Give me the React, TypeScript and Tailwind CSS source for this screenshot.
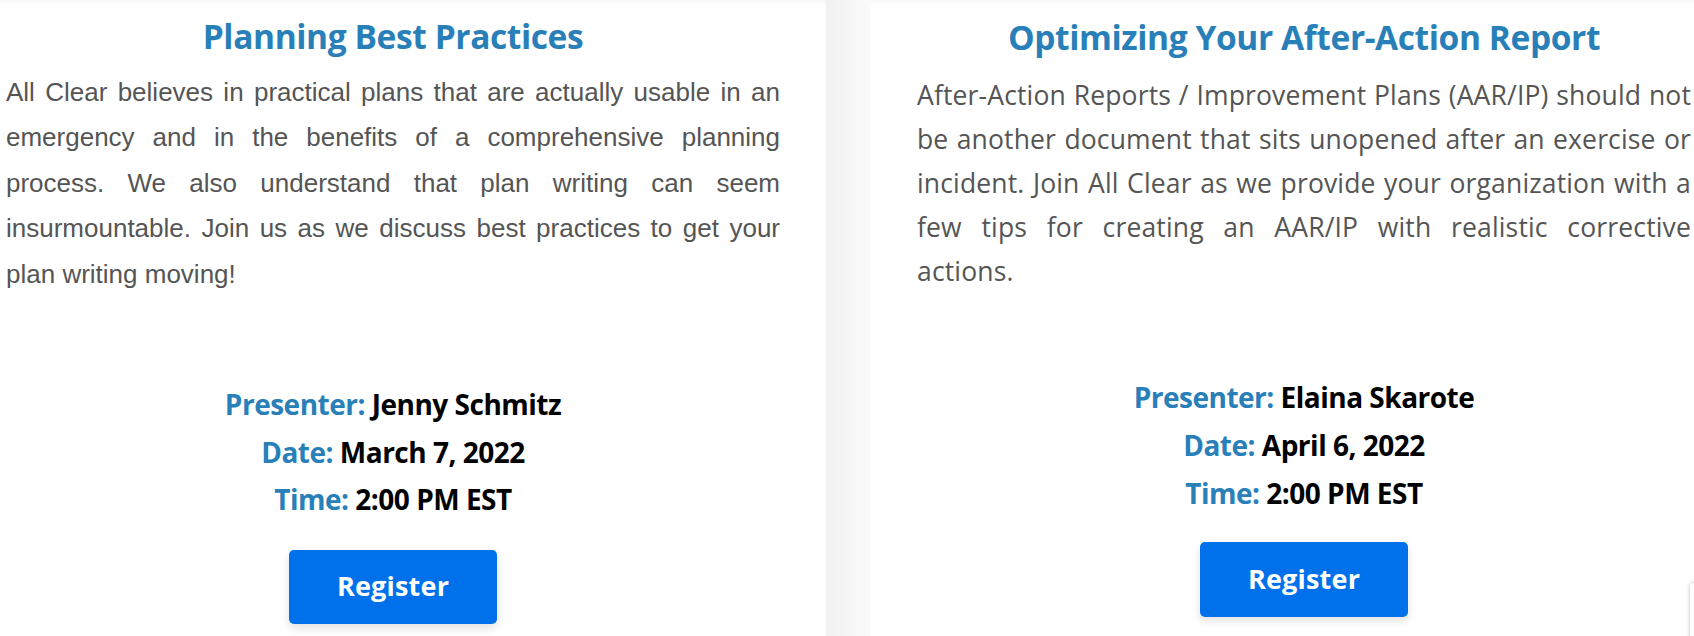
import React from 'react';

type Session = {
  title: string;
  body: string;
  presenter: string;
  date: string;
  time: string;
};

const sessions: Session[] = [
  {
    title: 'Planning Best Practices',
    body: 'All Clear believes in practical plans that are actually usable in an emergency and in the benefits of a comprehensive planning process. We also understand that plan writing can seem insurmountable. Join us as we discuss best practices to get your plan writing moving!',
    presenter: 'Jenny Schmitz',
    date: 'March 7, 2022',
    time: '2:00 PM EST',
  },
  {
    title: 'Optimizing Your After-Action Report',
    body: 'After-Action Reports / Improvement Plans (AAR/IP) should not be another document that sits unopened after an exercise or incident. Join All Clear as we provide your organization with a few tips for creating an AAR/IP with realistic corrective actions.',
    presenter: 'Elaina Skarote',
    date: 'April 6, 2022',
    time: '2:00 PM EST',
  },
];

function InfoLine({ label, value }: { label: string; value: string }) {
  return (
    <div>
      <span className="text-[#2980b9]">{label}</span> <span className="text-black">{value}</span>
    </div>
  );
}

function RegisterButton({ className }: { className: string }) {
  return (
    <button
      className={
        'w-[208px] h-[74px] rounded-[5px] bg-[#0071eb] text-white text-[27px] font-bold font-["Open_Sans",sans-serif] tracking-[0.2px] shadow-[0_4px_10px_rgba(0,0,0,0.12)] ' +
        className
      }
    >
      Register
    </button>
  );
}

export default function App() {
  const [left, right] = sessions;

  return (
    <div className="relative w-[1694px] h-[636px] overflow-hidden bg-white flex shadow-[inset_0_8px_8px_-8px_rgba(0,0,0,0.07)]">
      {/* left card */}
      <div className="w-[826px] shrink-0 pl-[6px] pr-[46px] pt-[14px] flex flex-col items-center">
        <h2 className="text-[33.5px] leading-[44px] font-bold text-[#2980b9] font-['Open_Sans',sans-serif] tracking-[-0.4px]">
          {left.title}
        </h2>
        <p className="mt-[12px] w-full text-[26px] leading-[45.4px] text-[#555555] text-justify font-['Liberation_Sans',Arial,sans-serif]">
          {left.body}
        </p>
        <div className="mt-[84px] text-center text-[28px] leading-[47.5px] font-bold font-['Open_Sans',sans-serif] tracking-[-0.5px]">
          <InfoLine label="Presenter:" value={left.presenter} />
          <InfoLine label="Date:" value={left.date} />
          <InfoLine label="Time:" value={left.time} />
        </div>
        <RegisterButton className="mt-[26px]" />
      </div>

      {/* gutter between cards */}
      <div className="w-[45px] shrink-0 bg-[linear-gradient(to_right,#f1f1f1,#f4f4f4_40%,#f8f8f8_60%,#fafafa)]" />

      {/* right card */}
      <div className="flex-1 pl-[46px] pr-[3px] pt-[15px] flex flex-col items-center">
        <h2 className="text-[33.5px] leading-[44px] font-bold text-[#2980b9] font-['Open_Sans',sans-serif] tracking-[-0.4px]">
          {right.title}
        </h2>
        <p className="mt-[14px] w-full text-[26.5px] leading-[44px] tracking-[0.15px] text-[#555555] text-justify font-['Open_Sans',sans-serif]">
          {right.body}
        </p>
        <div className="mt-[80px] text-center text-[28px] leading-[48px] font-bold font-['Open_Sans',sans-serif] tracking-[-0.5px]">
          <InfoLine label="Presenter:" value={right.presenter} />
          <InfoLine label="Date:" value={right.date} />
          <InfoLine label="Time:" value={right.time} />
        </div>
        <RegisterButton className="mt-[25px] h-[75px]" />
      </div>

      {/* badge peeking in at the bottom-right corner */}
      <div className="absolute left-[1690px] top-[583px] w-[60px] h-[70px] rounded-[4px] bg-white shadow-[0_0_4px_rgba(0,0,0,0.25)]" />
    </div>
  );
}
